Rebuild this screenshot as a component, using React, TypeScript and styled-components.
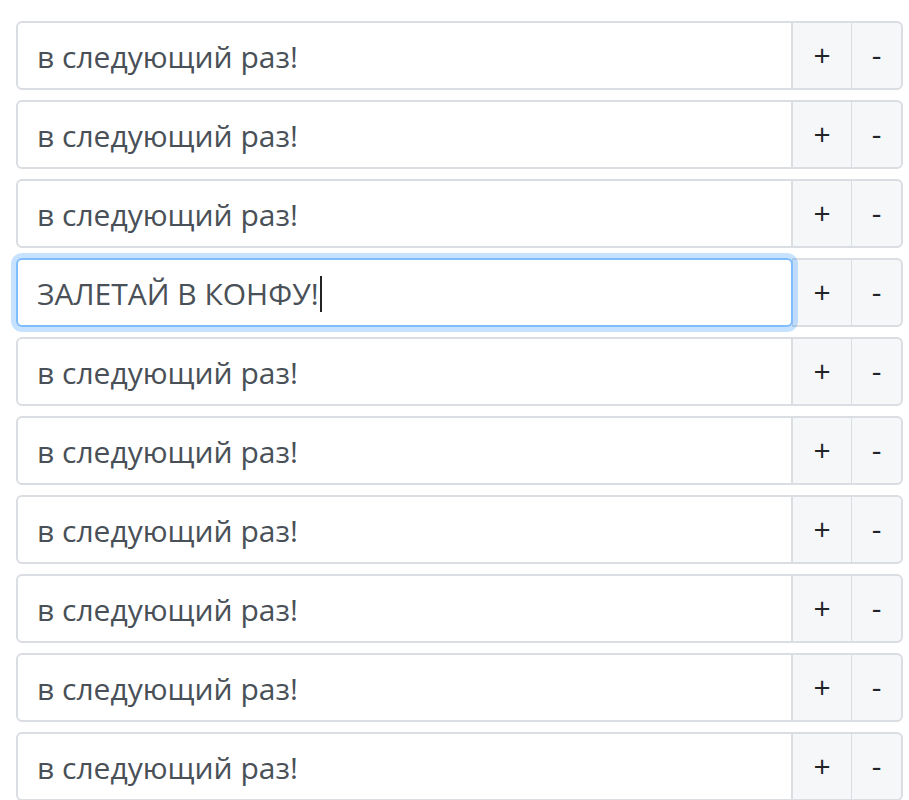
import React from "react";
import styled, { createGlobalStyle, css } from "styled-components";

const Global = createGlobalStyle`
  html, body { margin: 0; padding: 0; background: #ffffff; }
  body { font-family: "Open Sans", "Noto Sans", sans-serif; }
`;

const List = styled.div`
  display: flex;
  flex-direction: column;
  gap: 10px;
  padding: 21px 6px 0 16px;
  height: 800px;
  box-sizing: border-box;
  overflow: hidden;
`;

const Group = styled.div`
  display: flex;
  height: 69px;
  flex-shrink: 0;
`;

const Field = styled.div<{ $focused?: boolean }>`
  flex: 1;
  display: flex;
  align-items: center;
  box-sizing: border-box;
  padding: 2px 19px 0;
  border: 2px solid #dadde1;
  border-right-width: 1px;
  border-radius: 6px 0 0 6px;
  background: #fff;
  color: #495057;
  font-size: 30px;
  position: relative;
  z-index: 0;
  ${(p) =>
    p.$focused &&
    css`
      border: 2px solid #80bdff;
      border-radius: 6px;
      box-shadow: 0 0 0 5px rgba(0, 123, 255, 0.22);
      z-index: 2;
      margin-right: -1px;
    `}
`;

const Caret = styled.span`
  display: inline-block;
  width: 2px;
  height: 36px;
  background: #222;
  margin-left: 1px;
`;

const Btn = styled.div<{ $last?: boolean; $w: number }>`
  width: ${(p) => p.$w}px;
  box-sizing: border-box;
  display: flex;
  align-items: center;
  justify-content: center;
  background: #f6f7f9;
  border: 2px solid #dadde1;
  border-left-width: 1px;
  ${(p) => !p.$last && css`border-right-width: 0;`}
  border-radius: ${(p) => (p.$last ? "0 6px 6px 0" : "0")};
  color: #212529;
  font-size: 30px;
  padding-bottom: 2px;
`;

const rows = Array.from({ length: 10 }, (_, i) => i);

export default function App() {
  return (
    <>
      <Global />
      <List>
        {rows.map((i) => (
          <Group key={i}>
            {i === 3 ? (
              <Field $focused>
                ЗАЛЕТАЙ В КОНФУ!
                <Caret />
              </Field>
            ) : (
              <Field>в следующий раз!</Field>
            )}
            <Btn $w={59}>+</Btn>
            <Btn $w={52} $last>
              -
            </Btn>
          </Group>
        ))}
      </List>
    </>
  );
}
